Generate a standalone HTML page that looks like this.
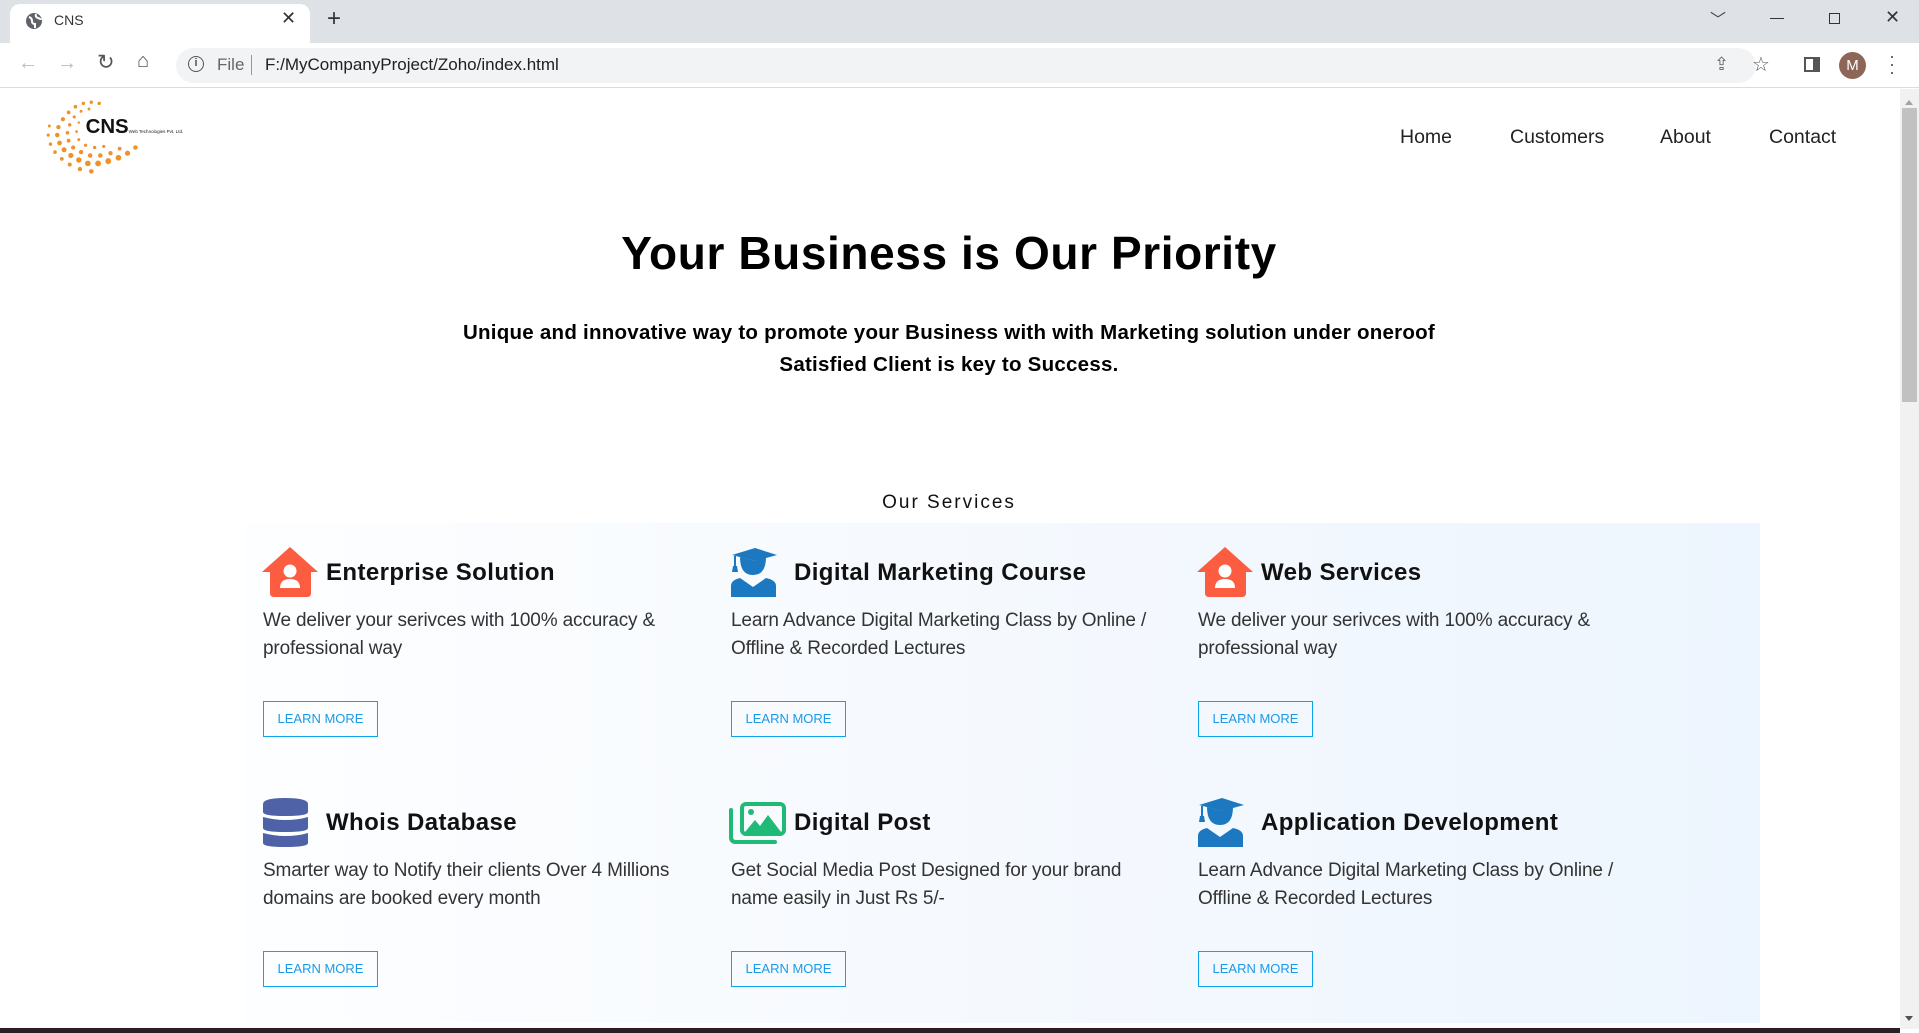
<!DOCTYPE html>
<html><head><meta charset="utf-8"><style>
*{margin:0;padding:0;box-sizing:border-box}
body{width:1919px;height:1033px;overflow:hidden;background:#fff;font-family:"Liberation Sans",Arial,sans-serif;position:relative}
.abs{position:absolute}
.tabbar{left:0;top:0;width:1919px;height:43px;background:#dee1e6}
.tab{left:10px;top:4px;width:300px;height:39px;background:#fff;border-radius:10px 10px 0 0}
.addr{left:0;top:43px;width:1919px;height:45px;background:#fff;border-bottom:1px solid #dadce0}
.omni{left:176px;top:48px;width:1580px;height:35px;background:#f1f3f4;border-radius:18px}
.nav a{position:absolute;top:126px;font-size:19.5px;color:#222;text-decoration:none}
h1{position:absolute;left:0;width:1898px;text-align:center;top:226px;font-size:46px;font-weight:bold;color:#000;letter-spacing:0.6px}
.sub{position:absolute;left:0;width:1898px;text-align:center;top:317px;font-size:20.5px;font-weight:bold;line-height:32px;color:#000;letter-spacing:0.25px}
.os{position:absolute;left:0;width:1898px;text-align:center;top:492px;font-size:19px;letter-spacing:2px;color:#111}
.panel{left:245px;top:523px;width:1515px;height:500px;background:linear-gradient(90deg,#fdfeff 0%,#f5f9fe 50%,#edf5fe 100%)}
.card{position:absolute;width:440px}
.card svg{position:absolute;left:-8px;top:-8px}
.card h3{position:absolute;left:63px;top:11px;font-size:24px;font-weight:bold;color:#111;white-space:nowrap;letter-spacing:0.4px}
.card p{position:absolute;left:0;top:59px;width:440px;font-size:19px;line-height:28px;color:#333;letter-spacing:-0.15px}
.card .btn{position:absolute;left:0;top:153px;width:115px;height:36px;border:1.5px solid #0aa5ec;color:#1b9ae8;font-size:13px;text-align:center;line-height:33px}
</style></head><body>
<div class="abs tabbar"></div>
<div class="abs tab"></div>
<svg class="abs" style="left:25px;top:12px" width="18" height="18" viewBox="0 0 18 18"><circle cx="9" cy="9" r="8" fill="#5f6368"/><path d="M4 5 q3 1 3 4 t3 3 v4 M11 2 q-1 3 2 4 t3 2" stroke="#fff" stroke-width="2" fill="none"/></svg>
<div class="abs" style="left:54px;top:12px;font-size:14px;color:#333">CNS</div>
<div class="abs" style="left:281px;top:8px;font-size:18px;color:#333">✕</div>
<div class="abs" style="left:327px;top:5px;font-size:24px;color:#333">+</div>
<div class="abs" style="left:1710px;top:6px;font-size:16px;color:#444">﹀</div>
<div class="abs" style="left:1770px;top:18px;width:14px;height:1px;background:#333"></div>
<div class="abs" style="left:1829px;top:13px;width:11px;height:11px;border:1.2px solid #333"></div>
<div class="abs" style="left:1885px;top:7px;font-size:18px;color:#333">✕</div>
<div class="abs addr"></div>
<div class="abs omni"></div>
<div class="abs" style="left:18px;top:52px;font-size:20px;color:#bbb">←</div>
<div class="abs" style="left:57px;top:52px;font-size:20px;color:#bbb">→</div>
<div class="abs" style="left:97px;top:50px;font-size:21px;color:#555">↻</div>
<div class="abs" style="left:137px;top:50px;font-size:20px;color:#555">⌂</div>
<div class="abs" style="left:188px;top:56px;width:16px;height:16px;border:1.8px solid #555;border-radius:50%;font-size:11px;text-align:center;line-height:13px;color:#555;font-weight:bold">i</div>
<div class="abs" style="left:217px;top:55px;font-size:17px;color:#666">File</div>
<div class="abs" style="left:251px;top:55px;width:1px;height:20px;background:#999"></div>
<div class="abs" style="left:265px;top:55px;font-size:17px;color:#202124">F:/MyCompanyProject/Zoho/index.html</div>
<div class="abs" style="left:1714px;top:54px;font-size:18px;color:#666">⇪</div>
<div class="abs" style="left:1752px;top:52px;font-size:20px;color:#555">☆</div>
<div class="abs" style="left:1804px;top:57px;width:16px;height:15px;border:2px solid #555;border-right-width:7px"></div>
<div class="abs" style="left:1839px;top:52px;width:27px;height:27px;border-radius:50%;background:#8d6658;color:#fff;font-size:15px;text-align:center;line-height:27px">M</div>
<div class="abs" style="left:1889px;top:52px;font-size:18px;color:#555;line-height:8px">·<br>·<br>·</div>
<div class="abs" style="left:1900px;top:89px;width:19px;height:940px;background:#f1f1f1"></div>
<div class="abs" style="left:1902px;top:108px;width:15px;height:294px;background:#c1c1c1"></div>
<div class="abs" style="left:1905px;top:96px;width:0;height:0;border:4px solid transparent;border-bottom:5px solid #a3a3a3"></div>
<div class="abs" style="left:1905px;top:1016px;width:0;height:0;border:4px solid transparent;border-top:5px solid #505050"></div>
<div class="abs" style="left:0;top:1028px;width:1900px;height:5px;background:#2a1f22"></div>
<svg class="abs" style="left:38px;top:92px" width="170" height="85" viewBox="0 0 150 75">
<g fill="#f0922a">
<circle cx="40" cy="10" r="1.5"/><circle cx="47" cy="9" r="1.5"/><circle cx="54" cy="10" r="1.5"/><circle cx="33" cy="13" r="1.6"/><circle cx="27" cy="18" r="1.7"/><circle cx="22" cy="24" r="1.8"/><circle cx="18" cy="31" r="1.9"/><circle cx="17" cy="38" r="2"/><circle cx="19" cy="45" r="2.1"/><circle cx="23" cy="51" r="2.2"/><circle cx="29" cy="56" r="2.3"/><circle cx="36" cy="60" r="2.4"/><circle cx="44" cy="63" r="2.5"/><circle cx="53" cy="63" r="2.6"/><circle cx="62" cy="61" r="2.6"/><circle cx="71" cy="58" r="2.5"/><circle cx="79" cy="54" r="2.3"/><circle cx="86" cy="49" r="2"/>
<circle cx="38" cy="17" r="1.3"/><circle cx="45" cy="15" r="1.3"/><circle cx="32" cy="22" r="1.4"/><circle cx="28" cy="29" r="1.5"/><circle cx="26" cy="36" r="1.6"/><circle cx="27" cy="43" r="1.7"/><circle cx="31" cy="49" r="1.8"/><circle cx="38" cy="53" r="1.9"/><circle cx="46" cy="56" r="2"/><circle cx="55" cy="56" r="2"/><circle cx="64" cy="54" r="1.9"/><circle cx="72" cy="50" r="1.7"/>
<circle cx="36" cy="27" r="1.1"/><circle cx="34" cy="35" r="1.2"/><circle cx="36" cy="42" r="1.3"/><circle cx="42" cy="47" r="1.4"/><circle cx="50" cy="49" r="1.5"/><circle cx="58" cy="48" r="1.4"/>
<circle cx="10" cy="30" r="1.3"/><circle cx="9" cy="38" r="1.4"/><circle cx="11" cy="46" r="1.5"/><circle cx="15" cy="53" r="1.6"/><circle cx="21" cy="59" r="1.7"/><circle cx="28" cy="64" r="1.8"/><circle cx="37" cy="68" r="1.9"/><circle cx="47" cy="70" r="2"/>
</g>
<text x="42" y="36" font-family="Liberation Sans" font-weight="bold" font-size="18" fill="#111">CNS</text>
<text x="80" y="36" font-family="Liberation Sans" font-size="4" fill="#222">Web Technologies Pvt. Ltd.</text>
</svg>
<div class="nav"><a style="left:1400px">Home</a><a style="left:1510px">Customers</a><a style="left:1660px">About</a><a style="left:1769px">Contact</a></div>
<h1>Your Business is Our Priority</h1>
<div class="sub">Unique and innovative way to promote your Business with with Marketing solution under oneroof<br>Satisfied Client is key to Success.</div>
<div class="os">Our Services</div>
<div class="abs panel"></div>

<div class="card" style="left:263px;top:548px"><svg width="70" height="70" viewBox="0 0 70 70"><path d="M35 7 L63 32 H56 V53 Q56 57 52 57 H19 Q15 57 15 53 V32 H7 Z" fill="#fc5c3f"/><circle cx="35" cy="31" r="6.5" fill="#fff"/><path d="M25 48 Q25 39 35 39 Q45 39 45 48 Z" fill="#fff"/></svg><h3>Enterprise Solution</h3><p>We deliver your serivces with 100% accuracy &amp; professional way</p><div class="btn">LEARN MORE</div></div>
<div class="card" style="left:731px;top:548px"><svg width="70" height="70" viewBox="0 0 70 70"><g fill="#1c78c0"><path d="M32 8 L54 15 L32 21 L9 15 Z"/><path d="M17 17 Q17 35 30 35 Q43 35 43 17 L32 21 Z"/><rect x="11" y="16" width="2" height="12"/><path d="M10 26 h4 l1 6 h-6z"/><path d="M8 57 V46 Q8 40 17 38 L30 47 L43 38 Q53 40 53 46 V57 Z"/></g></svg><h3>Digital Marketing Course</h3><p>Learn Advance Digital Marketing Class by Online / Offline &amp; Recorded Lectures</p><div class="btn">LEARN MORE</div></div>
<div class="card" style="left:1198px;top:548px"><svg width="70" height="70" viewBox="0 0 70 70"><path d="M35 7 L63 32 H56 V53 Q56 57 52 57 H19 Q15 57 15 53 V32 H7 Z" fill="#fc5c3f"/><circle cx="35" cy="31" r="6.5" fill="#fff"/><path d="M25 48 Q25 39 35 39 Q45 39 45 48 Z" fill="#fff"/></svg><h3>Web Services</h3><p>We deliver your serivces with 100% accuracy &amp; professional way</p><div class="btn">LEARN MORE</div></div>

<div class="card" style="left:263px;top:798px"><svg width="70" height="70" viewBox="0 0 70 70"><g fill="#4f62a8"><path d="M8 14 Q8 8 30 8 Q53 8 53 14 V22 Q53 26 30 26 Q8 26 8 22 Z"/><path d="M8 27 Q20 30 30 30 Q43 30 53 27 V38 Q53 42 30 42 Q8 42 8 38 Z"/><path d="M8 43 Q20 46 30 46 Q43 46 53 43 V53 Q53 57 30 57 Q8 57 8 53 Z"/></g></svg><h3>Whois Database</h3><p>Smarter way to Notify their clients Over 4 Millions domains are booked every month</p><div class="btn">LEARN MORE</div></div>
<div class="card" style="left:731px;top:798px"><svg width="70" height="70" viewBox="0 0 70 70"><g fill="none" stroke="#1fba76" stroke-width="4" stroke-linecap="round"><path d="M8 20 V47 Q8 52 13 52 H52"/><rect x="19" y="14" width="42" height="30" rx="4"/></g><g fill="#1fba76"><circle cx="28" cy="22" r="3"/><path d="M22 42 L32 30 L37 36 L45 25 L58 42 Z"/></g></svg><h3>Digital Post</h3><p>Get Social Media Post Designed for your brand name easily in Just Rs 5/-</p><div class="btn">LEARN MORE</div></div>
<div class="card" style="left:1198px;top:798px"><svg width="70" height="70" viewBox="0 0 70 70"><g fill="#1c78c0"><path d="M32 8 L54 15 L32 21 L9 15 Z"/><path d="M17 17 Q17 35 30 35 Q43 35 43 17 L32 21 Z"/><rect x="11" y="16" width="2" height="12"/><path d="M10 26 h4 l1 6 h-6z"/><path d="M8 57 V46 Q8 40 17 38 L30 47 L43 38 Q53 40 53 46 V57 Z"/></g></svg><h3 style="left:63px">Application Development</h3><p>Learn Advance Digital Marketing Class by Online / Offline &amp; Recorded Lectures</p><div class="btn">LEARN MORE</div></div>
</body></html>
